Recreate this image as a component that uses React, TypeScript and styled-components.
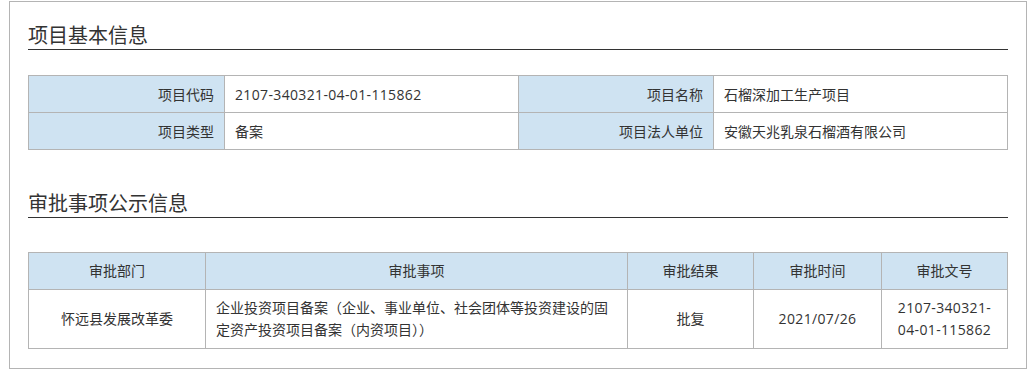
import styled, { createGlobalStyle } from "styled-components";

const GlobalStyle = createGlobalStyle`
  body {
    margin: 0;
    background: #fff;
    font-family: "Open Sans", "Noto Sans CJK SC", sans-serif;
    color: #333;
  }
`;

const basicInfo = [
  [
    { label: "项目代码", value: "2107-340321-04-01-115862", numeric: true },
    { label: "项目名称", value: "石榴深加工生产项目" },
  ],
  [
    { label: "项目类型", value: "备案" },
    { label: "项目法人单位", value: "安徽天兆乳泉石榴酒有限公司" },
  ],
];

const approvals = [
  {
    dept: "怀远县发展改革委",
    item: "企业投资项目备案（企业、事业单位、社会团体等投资建设的固定资产投资项目备案（内资项目））",
    result: "批复",
    date: "2021/07/26",
    docNo: ["2107-340321-", "04-01-115862"],
  },
];

const App = () => {
  return (
    <>
      <GlobalStyle />
      <Panel>
        <SectionTitle>项目基本信息</SectionTitle>
        <InfoTable>
          <colgroup>
            <col style={{ width: 196 }} />
            <col style={{ width: 294 }} />
            <col style={{ width: 195 }} />
            <col />
          </colgroup>
          <tbody>
            {basicInfo.map((row, i) => (
              <tr key={i}>
                {row.map((cell) => [
                  <Label key={cell.label}>{cell.label}</Label>,
                  <Value key={cell.label + "-v"}>
                    {cell.numeric ? <Digits>{cell.value}</Digits> : cell.value}
                  </Value>,
                ])}
              </tr>
            ))}
          </tbody>
        </InfoTable>

        <SectionTitle $gap={40}>审批事项公示信息</SectionTitle>
        <ApprovalTable>
          <colgroup>
            <col style={{ width: 177 }} />
            <col style={{ width: 422 }} />
            <col style={{ width: 126 }} />
            <col style={{ width: 128 }} />
            <col />
          </colgroup>
          <thead>
            <tr>
              <Head>审批部门</Head>
              <Head>审批事项</Head>
              <Head>审批结果</Head>
              <Head>审批时间</Head>
              <Head>审批文号</Head>
            </tr>
          </thead>
          <tbody>
            {approvals.map((a) => (
              <tr key={a.date}>
                <Cell>{a.dept}</Cell>
                <Cell $left>{a.item}</Cell>
                <Cell>{a.result}</Cell>
                <Cell>
                  <Digits>{a.date}</Digits>
                </Cell>
                <Cell>
                  <Digits>
                    {a.docNo[0]}
                    <br />
                    {a.docNo[1]}
                  </Digits>
                </Cell>
              </tr>
            ))}
          </tbody>
        </ApprovalTable>
      </Panel>
    </>
  );
};

const Panel = styled.div`
  box-sizing: border-box;
  width: 1018px;
  height: 368px;
  margin: 1px 0 0 9px;
  padding: 0 18px;
  border: 1px solid #b4b4b4;
  display: flex;
  flex-direction: column;
`;

const SectionTitle = styled.h2<{ $gap?: number }>`
  margin: ${(p) => p.$gap ?? 20}px 0 0;
  padding: 0 0 1px;
  font-family: "Noto Sans CJK SC", sans-serif;
  font-size: 20px;
  line-height: 26px;
  font-weight: normal;
  color: #333;
  border-bottom: 1px solid #333;
`;

const InfoTable = styled.table`
  width: 980px;
  margin-top: 25px;
  border-collapse: collapse;
  table-layout: fixed;
  font-size: 14px;

  td {
    height: 37px;
    border: 1px solid #b4b4b4;
    box-sizing: border-box;
  }
`;

const Label = styled.td`
  background: #cfe3f2;
  text-align: right;
  padding: 0 10px;
`;

const Value = styled.td`
  background: #fff;
  text-align: left;
  padding: 0 10px;
`;

const Digits = styled.span`
  letter-spacing: 0.35px;
`;

const ApprovalTable = styled.table`
  width: 980px;
  margin-top: 34px;
  border-collapse: collapse;
  table-layout: fixed;
  font-size: 14px;
  line-height: 22px;
`;

const Head = styled.th`
  height: 37px;
  padding: 0 8px;
  background: #cfe3f2;
  border: 1px solid #b4b4b4;
  box-sizing: border-box;
  font-weight: normal;
  text-align: center;
  color: #333;
`;

const Cell = styled.td<{ $left?: boolean }>`
  height: 59px;
  padding: 6px 10px;
  border: 1px solid #b4b4b4;
  box-sizing: border-box;
  text-align: ${(p) => (p.$left ? "left" : "center")};
  vertical-align: middle;
`;

export default App;
